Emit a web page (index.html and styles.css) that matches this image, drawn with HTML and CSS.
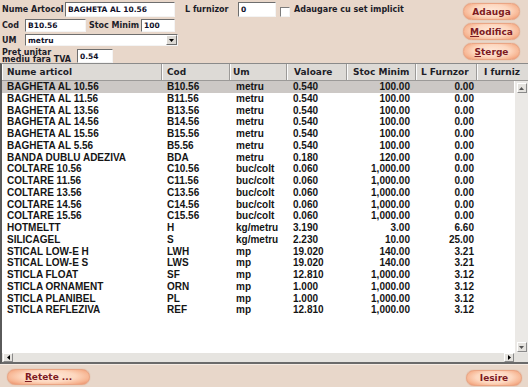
FILE: index.html
```html
<!DOCTYPE html>
<html>
<head>
<meta charset="utf-8">
<link rel="stylesheet" href="styles.css">
</head>
<body>
<div class="app">
  <div class="top">
    <div class="form">
      <div class="row r1">
        <span class="lbl w63">Nume Artocol</span>
        <span class="inp w110">BAGHETA AL 10.56</span>
        <span class="lbl w53 ml10">L furnizor</span>
        <span class="inp w38">0</span>
        <span class="chk"></span>
        <span class="lbl ml4">Adaugare cu set implicit</span>
      </div>
      <div class="row r2">
        <span class="lbl w23">Cod</span>
        <span class="inp w61">B10.56</span>
        <span class="lbl w52 ml3">Stoc Minim</span>
        <span class="inp w34">100</span>
      </div>
      <div class="row r3">
        <span class="lbl w23">UM</span>
        <span class="sel">
          <span class="seltxt">metru</span>
          <span class="selbtn"><svg width="5" height="3" viewBox="0 0 5 3"><path d="M0 0H5L2.5 3Z" fill="#000"/></svg></span>
        </span>
      </div>
      <div class="row r4">
        <span class="lbl w75 two">Pret unitar<br>mediu fara TVA</span>
        <span class="inp w36">0.54</span>
      </div>
    </div>
    <div class="btns">
      <button class="pill">Adauga</button>
      <button class="pill"><u>M</u>odifica</button>
      <button class="pill"><u>S</u>terge</button>
    </div>
  </div>

  <div class="grid">
    <div class="hdr">
      <div class="hc">Nume articol</div>
      <div class="hc">Cod</div>
      <div class="hc">Um</div>
      <div class="hc">Valoare</div>
      <div class="hc">Stoc Minim</div>
      <div class="hc">L Furnzor</div>
      <div class="hc last">I furniz</div>
    </div>
    <div class="body">
      <div class="rows">
        <div class="tr sel-row"><span>BAGHETA AL 10.56</span><span>B10.56</span><span>metru</span><span>0.540</span><span class="n">100.00</span><span class="n">0.00</span><span></span></div>
        <div class="tr"><span>BAGHETA AL 11.56</span><span>B11.56</span><span>metru</span><span>0.540</span><span class="n">100.00</span><span class="n">0.00</span><span></span></div>
        <div class="tr"><span>BAGHETA AL 13.56</span><span>B13.56</span><span>metru</span><span>0.540</span><span class="n">100.00</span><span class="n">0.00</span><span></span></div>
        <div class="tr"><span>BAGHETA AL 14.56</span><span>B14.56</span><span>metru</span><span>0.540</span><span class="n">100.00</span><span class="n">0.00</span><span></span></div>
        <div class="tr"><span>BAGHETA AL 15.56</span><span>B15.56</span><span>metru</span><span>0.540</span><span class="n">100.00</span><span class="n">0.00</span><span></span></div>
        <div class="tr"><span>BAGHETA AL 5.56</span><span>B5.56</span><span>metru</span><span>0.540</span><span class="n">100.00</span><span class="n">0.00</span><span></span></div>
        <div class="tr"><span>BANDA DUBLU ADEZIVA</span><span>BDA</span><span>metru</span><span>0.180</span><span class="n">120.00</span><span class="n">0.00</span><span></span></div>
        <div class="tr"><span>COLTARE 10.56</span><span>C10.56</span><span>buc/colt</span><span>0.060</span><span class="n">1,000.00</span><span class="n">0.00</span><span></span></div>
        <div class="tr"><span>COLTARE 11.56</span><span>C11.56</span><span>buc/colt</span><span>0.060</span><span class="n">1,000.00</span><span class="n">0.00</span><span></span></div>
        <div class="tr"><span>COLTARE 13.56</span><span>C13.56</span><span>buc/colt</span><span>0.060</span><span class="n">1,000.00</span><span class="n">0.00</span><span></span></div>
        <div class="tr"><span>COLTARE 14.56</span><span>C14.56</span><span>buc/colt</span><span>0.060</span><span class="n">1,000.00</span><span class="n">0.00</span><span></span></div>
        <div class="tr"><span>COLTARE 15.56</span><span>C15.56</span><span>buc/colt</span><span>0.060</span><span class="n">1,000.00</span><span class="n">0.00</span><span></span></div>
        <div class="tr"><span>HOTMELTT</span><span>H</span><span>kg/metru</span><span>3.190</span><span class="n">3.00</span><span class="n">6.60</span><span></span></div>
        <div class="tr"><span>SILICAGEL</span><span>S</span><span>kg/metru</span><span>2.230</span><span class="n">10.00</span><span class="n">25.00</span><span></span></div>
        <div class="tr"><span>STICAL LOW-E H</span><span>LWH</span><span>mp</span><span>19.020</span><span class="n">140.00</span><span class="n">3.21</span><span></span></div>
        <div class="tr"><span>STICAL LOW-E S</span><span>LWS</span><span>mp</span><span>19.020</span><span class="n">140.00</span><span class="n">3.21</span><span></span></div>
        <div class="tr"><span>STICLA FLOAT</span><span>SF</span><span>mp</span><span>12.810</span><span class="n">1,000.00</span><span class="n">3.12</span><span></span></div>
        <div class="tr"><span>STICLA ORNAMENT</span><span>ORN</span><span>mp</span><span>1.000</span><span class="n">1,000.00</span><span class="n">3.12</span><span></span></div>
        <div class="tr"><span>STICLA PLANIBEL</span><span>PL</span><span>mp</span><span>1.000</span><span class="n">1,000.00</span><span class="n">3.12</span><span></span></div>
        <div class="tr"><span>STICLA REFLEZIVA</span><span>REF</span><span>mp</span><span>12.810</span><span class="n">1,000.00</span><span class="n">3.12</span><span></span></div>
      </div>
      <div class="vscroll">
        <span class="sbtn"><svg width="5" height="3" viewBox="0 0 5 3"><path d="M0 3H5L2.5 0Z" fill="#555"/></svg></span>
        <span class="sbtn"><svg width="5" height="3" viewBox="0 0 5 3"><path d="M0 0H5L2.5 3Z" fill="#555"/></svg></span>
      </div>
    </div>
    <div class="hbar">
      <div class="hscroll">
        <span class="sbtn"><svg width="3" height="5" viewBox="0 0 3 5"><path d="M3 0V5L0 2.5Z" fill="#000"/></svg></span>
        <span class="sbtn"><svg width="3" height="5" viewBox="0 0 3 5"><path d="M0 0V5L3 2.5Z" fill="#000"/></svg></span>
      </div>
      <div class="corner"></div>
    </div>
  </div>

  <div class="bottom">
    <button class="pill wide"><u>R</u>etete ...</button>
    <button class="pill exit">Iesire</button>
  </div>
</div>
</body>
</html>
```

FILE: styles.css
```css
* { box-sizing: border-box; margin: 0; padding: 0; }
html, body { width: 528px; height: 387px; overflow: hidden; }
body {
  background: #e8d7ca;
  font-family: "DejaVu Sans", sans-serif;
  font-weight: bold;
  color: #1c1c28;
}
.app { display: flex; flex-direction: column; height: 387px; }

/* top form */
.top { height: 63px; display: flex; justify-content: space-between; }
.form { padding: 2px 0 0 2px; display: flex; flex-direction: column; }
.row { display: flex; align-items: center; }
.r1 { height: 15px; margin-bottom: 2px; }
.r2 { height: 13px; margin-bottom: 2px; }
.r3 { height: 12px; margin-bottom: 3px; }
.r4 { height: 14px; }
.lbl { font-size: 8px; white-space: nowrap; flex: none; }
.two { line-height: 7.5px; }
.w23 { width: 23px; } .w52 { width: 52px; } .w53 { width: 53px; }
.w63 { width: 63px; } .w75 { width: 75px; }
.w34 { width: 34px; } .w36 { width: 36px; } .w38 { width: 38px; }
.w61 { width: 61px; } .w110 { width: 110px; }
.ml3 { margin-left: 3px; } .ml4 { margin-left: 4px; } .ml10 { margin-left: 10px; }
.inp {
  flex: none;
  height: 100%;
  background: #fff;
  border-top: 1px solid #6e6e6e;
  border-left: 1px solid #6e6e6e;
  border-right: 1px solid #f4f4f4;
  border-bottom: 1px solid #f4f4f4;
  font-size: 7.5px;
  padding-left: 2px;
  display: flex;
  align-items: center;
  color: #10102a;
}
.chk {
  flex: none;
  width: 10px; height: 10px;
  margin-left: 4px; margin-top: 5px;
  background: #fff;
  border-top: 1px solid #7c7c7c;
  border-left: 1px solid #7c7c7c;
  border-right: 1px solid #f4f4f4;
  border-bottom: 1px solid #f4f4f4;
}
.sel {
  flex: none;
  width: 153px; height: 100%;
  background: #fff;
  border-top: 1px solid #6e6e6e;
  border-left: 1px solid #6e6e6e;
  border-right: 1px solid #f4f4f4;
  border-bottom: 1px solid #f4f4f4;
  display: flex;
  align-items: stretch;
  font-size: 7.5px;
}
.seltxt { flex: 1; padding-left: 2px; display: flex; align-items: center; color: #10102a; }
.selbtn {
  width: 11px;
  background: #dcd9d4;
  border: 1px solid;
  border-color: #fff #6c6c6c #6c6c6c #fff;
  display: flex; align-items: center; justify-content: center;
}

.btns { display: flex; flex-direction: column; gap: 3px; padding: 3px 8px 0 0; }
.pill {
  width: 57px; height: 17px;
  border: 1px solid #eaa584;
  border-radius: 9px;
  background: radial-gradient(ellipse 60% 75% at 50% 45%, #ffe9da 0%, #fdd7bf 55%, #f7b592 85%, #ef9c77 100%);
  box-shadow: 0 0 1px #d4906c;
  font-family: "DejaVu Sans", sans-serif;
  font-weight: bold;
  font-size: 9px;
  color: #7d1a22;
  display: flex; align-items: center; justify-content: center;
}
.pill u { text-decoration-thickness: 1px; text-underline-offset: 1px; }

/* grid */
.grid {
  height: 301px;
  display: flex; flex-direction: column;
  border-left: 2px solid #5a5a5a;
  border-top: 1px solid #8a8a8a;
  border-bottom: 2px solid #6a6a6a;
  background: #fff;
  overflow: hidden;
}
.hdr, .tr {
  display: grid;
  grid-template-columns: 160px 68px 57px 60px 69px 61px 1fr;
}
.hdr { height: 17px; background: #dddad6; border-bottom: 1px solid #9c9a98; flex: none; }
.hc {
  font-size: 9px;
  line-height: 16px;
  padding-left: 5px;
  white-space: nowrap;
  overflow: hidden;
  border-right: 1px solid #9c9a98;
  box-shadow: inset 1px 0 #fbfbfb;
  color: #1e1e28;
}
.hc:nth-child(3) { padding-left: 3px; }
.hc:nth-child(4) { padding-left: 7px; }
.hc:nth-child(5) { padding-left: 6px; }
.hc:nth-child(7) { padding-left: 7px; }
.hc.last { border-right: 0; }

.body { flex: 1; display: flex; min-height: 0; }
.rows { flex: 1; }
.tr {
  height: 11.75px;
  line-height: 11.75px;
  font-family: "Liberation Sans", Arial, sans-serif;
  font-size: 10px;
  color: #151515;
}
.tr span { white-space: nowrap; overflow: hidden; padding-left: 5px; }
.tr span:nth-child(3) { padding-left: 6px; }
.tr span:nth-child(4) { padding-left: 6px; }
.tr span.n { text-align: right; padding-left: 0; padding-right: 6px; }
.tr span.n:nth-child(6) { padding-right: 3px; }
.sel-row { background: #ccc8c5; }

.vscroll {
  width: 14px;
  background: #ebe9e6;
  border-left: 1px solid #fff;
  display: flex; flex-direction: column; justify-content: space-between;
  align-items: center;
  padding: 2px 0 1px;
}
.sbtn {
  width: 10px; height: 10px;
  background: #e4e2de;
  border: 1px solid;
  border-color: #fff #8a8a8a #8a8a8a #fff;
  display: flex; align-items: center; justify-content: center;
}
.hbar { height: 9px; display: flex; flex: none; }
.hscroll {
  flex: 1;
  background: #e6e4e0;
  display: flex; justify-content: space-between;
  padding-left: 1px;
}
.hscroll .sbtn { height: 9px; width: 10px; }
.corner { width: 14px; background: #e4e2de; }

/* bottom */
.bottom {
  flex: 1;
  display: flex; justify-content: space-between; align-items: flex-start;
  padding: 4px 6px 0 7px;
  border-top: 1px solid #f6ece4;
}
.pill.wide { width: 83px; height: 16px; }
.pill.exit { width: 56px; height: 16px; margin-top: 1px; }
```
